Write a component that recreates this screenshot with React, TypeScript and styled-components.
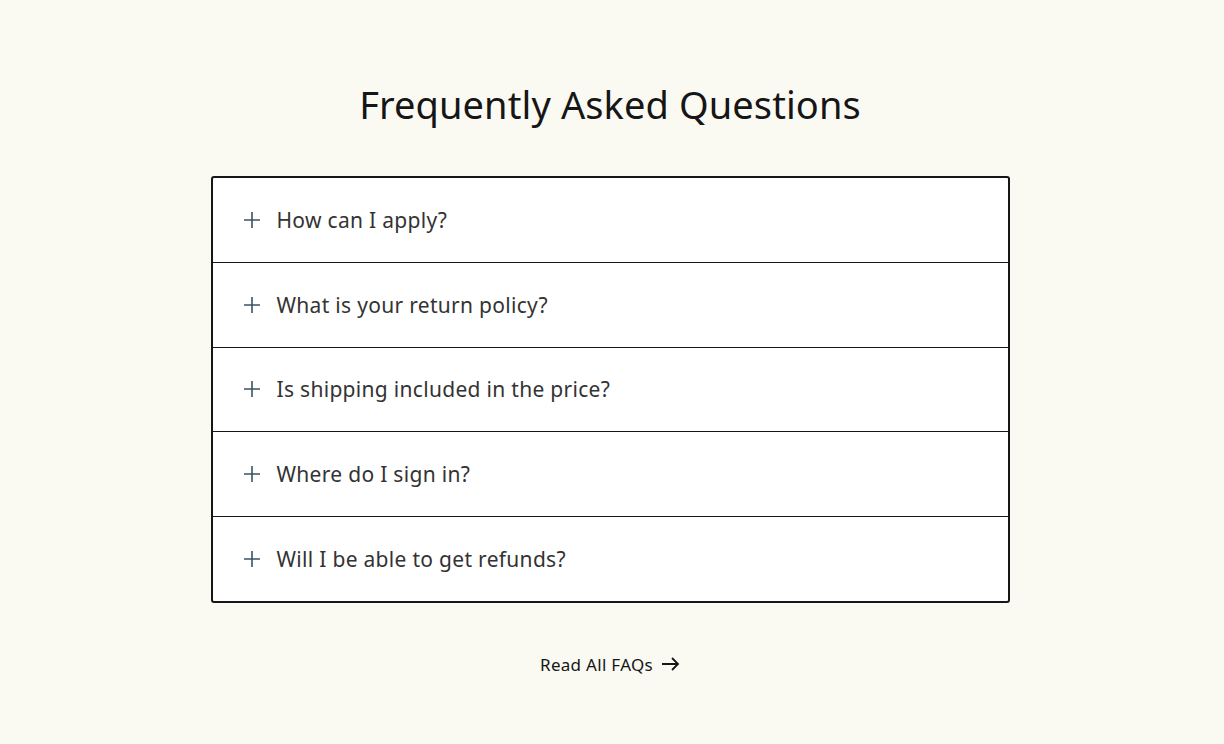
import React from 'react'
import styled, { createGlobalStyle } from 'styled-components'

const GlobalStyle = createGlobalStyle`
  html, body {
    margin: 0;
    padding: 0;
    background: #fbfaf2;
  }
  body {
    font-family: 'Noto Sans', 'Open Sans', sans-serif;
    color: #161616;
  }
`

const Page = styled.main`
  min-height: 744px;
  display: flex;
  flex-direction: column;
  align-items: center;
  padding: 78px 4px 0 0;
  box-sizing: border-box;
`

const Title = styled.h1`
  margin: 0;
  font-size: 38px;
  font-weight: 400;
  line-height: 52px;
  letter-spacing: 0.1px;
  color: #161616;
`

const List = styled.div`
  margin-top: 46px;
  width: 799px;
  box-sizing: border-box;
  background: #fff;
  border: 2px solid #161616;
  border-radius: 3px;
  display: flex;
  flex-direction: column;
`

const Item = styled.button<{ $first?: boolean }>`
  all: unset;
  height: 83.8px;
  display: flex;
  align-items: center;
  gap: 16px;
  padding-left: 30px;
  border-top: ${p => (p.$first ? 'none' : '1px solid #161616')};
  cursor: pointer;
  font-family: 'Noto Sans', 'Open Sans', sans-serif;
  font-size: 21px;
  letter-spacing: 0.3px;
  color: #333;
`

const PlusIcon = styled.svg`
  width: 18px;
  height: 18px;
  flex-shrink: 0;
  color: #3a5465;
`

const Link = styled.a`
  margin-top: 50px;
  display: flex;
  align-items: center;
  gap: 9px;
  font-size: 17px;
  letter-spacing: 0.3px;
  color: #161616;
  text-decoration: none;
`

const Arrow = styled.svg`
  width: 18px;
  height: 14px;
`

const questions = [
  'How can I apply?',
  'What is your return policy?',
  'Is shipping included in the price?',
  'Where do I sign in?',
  'Will I be able to get refunds?',
]

export default function App() {
  return (
    <>
      <GlobalStyle />
      <Page>
        <Title>Frequently Asked Questions</Title>
        <List>
          {questions.map((q, i) => (
            <Item key={q} $first={i === 0}>
              <PlusIcon viewBox="0 0 18 18" fill="none">
                <path d="M9 1v16M1 9h16" stroke="currentColor" strokeWidth="1.6" />
              </PlusIcon>
              {q}
            </Item>
          ))}
        </List>
        <Link href="#">
          Read All FAQs
          <Arrow viewBox="0 0 18 14" fill="none">
            <path d="M0 7h16M10 1l6 6-6 6" stroke="currentColor" strokeWidth="1.8" />
          </Arrow>
        </Link>
      </Page>
    </>
  )
}
